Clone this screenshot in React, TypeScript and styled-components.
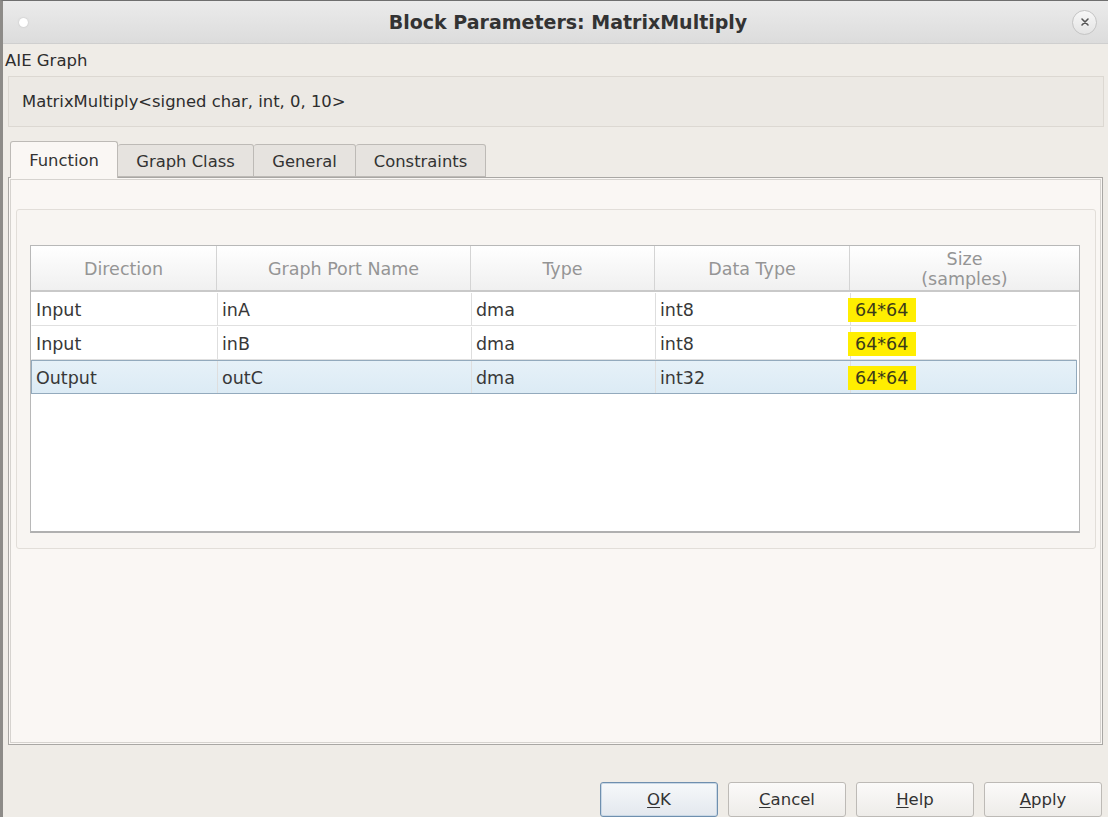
import React from "react";
import styled, { createGlobalStyle } from "styled-components";

const Global = createGlobalStyle`
  html, body { margin: 0; padding: 0; }
  body { font-family: "DejaVu Sans", "Noto Sans", sans-serif; background: #efece7; }
`;

const Window = styled.div`
  width: 1108px;
  height: 817px;
  box-sizing: border-box;
  border-left: 3px solid #8d8b88;
  border-top: 1px solid #6f6f6f;
  background: #efece7;
  display: flex;
  flex-direction: column;
  overflow: hidden;
`;

const TitleBar = styled.div`
  height: 42px;
  flex: none;
  display: flex;
  align-items: center;
  padding: 0 11px 0 16px;
  background: linear-gradient(#ebebeb, #dcdcdc);
  border-bottom: 1px solid #cfcfcf;
`;

const Dot = styled.div`
  width: 9px;
  height: 9px;
  border-radius: 50%;
  background: #ffffff;
  box-shadow: 0 0 2px #bbb;
`;

const Title = styled.div`
  flex: 1;
  text-align: center;
  font-weight: bold;
  font-size: 19px;
  color: #333;
  padding-left: 36px;
`;

const CloseBtn = styled.div`
  width: 23px;
  height: 23px;
  border-radius: 50%;
  border: 1px solid #c4c4c4;
  background: linear-gradient(#f7f7f7, #e4e4e4);
  display: flex;
  align-items: center;
  justify-content: center;
`;

const Body = styled.div`
  flex: 1;
  display: flex;
  flex-direction: column;
  padding: 0 4px 0 5px;
`;

const SectionLabel = styled.div`
  font-size: 16.5px;
  color: #2e2e2e;
  height: 32px;
  line-height: 34px;
  margin-left: -3px;
`;

const DescBox = styled.div`
  height: 51px;
  box-sizing: border-box;
  border: 1px solid #dcd8d2;
  background: #ece9e4;
  font-size: 16.4px;
  color: #2e2e2e;
  display: flex;
  align-items: center;
  padding-left: 13px;
`;

const TabRow = styled.div`
  display: flex;
  align-items: flex-end;
  margin-top: 14px;
  height: 36px;
  padding-left: 2px;
  position: relative;
  z-index: 1;
`;

const Tab = styled.div<{ $active?: boolean; $w: number }>`
  width: ${(p) => p.$w}px;
  box-sizing: border-box;
  height: ${(p) => (p.$active ? 37 : 33)}px;
  margin-bottom: ${(p) => (p.$active ? -1 : 0)}px;
  border: 1px solid #bdbab6;
  border-bottom: ${(p) => (p.$active ? "none" : "1px solid #bdbab6")};
  border-left: ${(p) => (p.$active ? "1px solid #bdbab6" : "none")};
  border-radius: 3px 3px 0 0;
  background: ${(p) => (p.$active ? "#faf7f4" : "#e6e3df")};
  font-size: 16.4px;
  color: #333;
  display: flex;
  align-items: center;
  justify-content: center;
  padding-top: ${(p) => (p.$active ? 0 : 1)}px;
`;

const Panel = styled.div`
  flex: 1;
  background: #faf7f4;
  border: 1px solid #a9a7a4;
  box-shadow: inset 0 0 0 1px #faf7f4, inset 0 0 0 2px #d6d3cf;
  margin-right: 1px;
  padding: 31px 6px 0 7px;
  display: flex;
  flex-direction: column;
`;

const Group = styled.div`
  height: 340px;
  box-sizing: border-box;
  border: 1px solid #e2ded9;
  border-radius: 3px;
  background: #f8f5f2;
  padding: 35px 15px 15px 13px;
  display: flex;
`;

const Table = styled.div`
  flex: 1;
  background: #ffffff;
  border: 1px solid #b8b8b8;
  border-bottom: 2px solid #b0b0b0;
  box-sizing: border-box;
  display: flex;
  flex-direction: column;
`;

const cols = "186px 254px 184px 195px 1fr";

const HeaderRow = styled.div`
  display: grid;
  grid-template-columns: ${cols};
  height: 44px;
  background: linear-gradient(#ffffff, #f0f0f0);
  border-bottom: 2px solid #c9c9c9;
`;

const HeadCell = styled.div`
  border-right: 1px solid #d4d4d4;
  color: #959595;
  font-size: 17.5px;
  display: flex;
  flex-direction: column;
  align-items: center;
  justify-content: center;
  line-height: 20px;
  padding-top: 2px;
  &:last-child { border-right: none; }
`;

const Row = styled.div<{ $selected?: boolean }>`
  display: grid;
  grid-template-columns: ${cols};
  height: 34px;
  box-sizing: border-box;
  margin: 0 2px 0 0;
  border: 1px solid ${(p) => (p.$selected ? "#93aabd" : "transparent")};
  border-bottom: 1px solid ${(p) => (p.$selected ? "#93aabd" : "#e0e0e0")};
  background: ${(p) => (p.$selected ? "linear-gradient(#e6f1f8, #dcebf5)" : "#fff")};
`;

const Cell = styled.div`
  border-right: 1px solid #dedede;
  font-size: 17.5px;
  color: #383838;
  display: flex;
  align-items: center;
  padding: 2px 0 0 4px;
  &:last-child { border-right: none; padding-left: 0; }
`;

const Highlight = styled.span`
  background: #ffee00;
  padding: 2px 8px 2px 7px;
  margin-left: -3px;
  color: #3a3a1a;
`;

const Footer = styled.div`
  height: 72px;
  flex: none;
  display: flex;
  justify-content: flex-end;
  align-items: flex-end;
  gap: 10px;
  padding-right: 2px;
`;

const Button = styled.div<{ $default?: boolean }>`
  width: 118px;
  height: 35px;
  box-sizing: border-box;
  border: 1px solid ${(p) => (p.$default ? "#6f8fae" : "#bdbab6")};
  border-radius: 3px;
  background: ${(p) =>
    p.$default ? "linear-gradient(#f6f8fa, #e3e8ee)" : "linear-gradient(#fbfaf9, #eeece9)"};
  box-shadow: ${(p) => (p.$default ? "inset 0 0 0 1px #c9d8e6" : "none")};
  font-size: 16.5px;
  color: #333;
  display: flex;
  align-items: center;
  justify-content: center;
  u { text-decoration: underline; text-underline-offset: 2px; }
`;

const rows = [
  ["Input", "inA", "dma", "int8", "64*64"],
  ["Input", "inB", "dma", "int8", "64*64"],
  ["Output", "outC", "dma", "int32", "64*64"],
];

const tabs: [string, number][] = [
  ["Function", 108],
  ["Graph Class", 136],
  ["General", 102],
  ["Constraints", 130],
];

export default function App() {
  return (
    <>
      <Global />
      <Window>
        <TitleBar>
          <Dot />
          <Title>Block Parameters: MatrixMultiply</Title>
          <CloseBtn>
            <svg width="10" height="10" viewBox="0 0 10 10">
              <path d="M2 2 L8 8 M8 2 L2 8" stroke="#555" strokeWidth="1.6" strokeLinecap="round" />
            </svg>
          </CloseBtn>
        </TitleBar>
        <Body>
          <SectionLabel>AIE Graph</SectionLabel>
          <DescBox>MatrixMultiply&lt;signed char, int, 0, 10&gt;</DescBox>
          <TabRow>
            {tabs.map(([t, w], i) => (
              <Tab key={t} $w={w} $active={i === 0}>
                {t}
              </Tab>
            ))}
          </TabRow>
          <Panel>
            <Group>
              <Table>
                <HeaderRow>
                  <HeadCell>Direction</HeadCell>
                  <HeadCell>Graph Port Name</HeadCell>
                  <HeadCell>Type</HeadCell>
                  <HeadCell>Data Type</HeadCell>
                  <HeadCell>
                    <span>Size</span>
                    <span>(samples)</span>
                  </HeadCell>
                </HeaderRow>
                {rows.map((r, i) => (
                  <Row key={i} $selected={i === 2}>
                    {r.slice(0, 4).map((c, j) => (
                      <Cell key={j}>{c}</Cell>
                    ))}
                    <Cell>
                      <Highlight>{r[4]}</Highlight>
                    </Cell>
                  </Row>
                ))}
              </Table>
            </Group>
          </Panel>
          <Footer>
            <Button $default>
              <span><u>O</u>K</span>
            </Button>
            <Button>
              <span><u>C</u>ancel</span>
            </Button>
            <Button>
              <span><u>H</u>elp</span>
            </Button>
            <Button>
              <span><u>A</u>pply</span>
            </Button>
          </Footer>
        </Body>
      </Window>
    </>
  );
}
